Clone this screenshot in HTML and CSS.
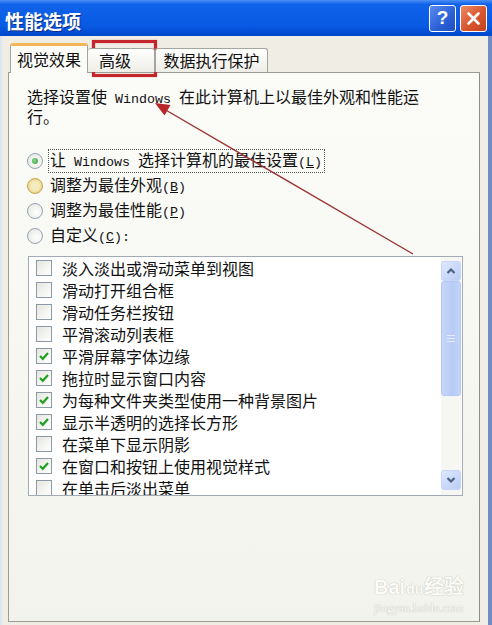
FILE: index.html
```html
<!DOCTYPE html>
<html lang="zh-CN">
<head>
    <meta charset="UTF-8">
    <meta name="viewport" content="width=device-width, initial-scale=1.0">
    <title>性能选项</title>

    <link rel="stylesheet" href="styles.css">
</head>

<body>

<div class="window">

    <!-- 标题栏 -->
    <div class="titlebar">
        <span class="title">性能选项</span>
        <div class="caption-buttons">
            <span class="cap-btn help">?</span>
            <span class="cap-btn close">
                <svg width="15" height="15" viewBox="0 0 15 15">
                    <path d="M2.5 2.5 L12.5 12.5 M12.5 2.5 L2.5 12.5" stroke="#fff" stroke-width="2.6" stroke-linecap="round"/>
                </svg>
            </span>
        </div>
    </div>

    <div class="client">

        <!-- 选项卡 -->
        <div class="tabs">
            <div class="tab active">视觉效果</div>
            <div class="tab second">高级</div>
            <div class="tab third">数据执行保护</div>
        </div>

        <div class="panel">
            <p class="desc">选择设置使<span class="en word">Windows</span>在此计算机上以最佳外观和性能运<br>行。</p>

            <div class="radios">
                <div class="radio">
                    <span class="dot checked"></span>
                    <span class="label focus">让<span class="en word">Windows</span>选择计算机的最佳设置<span class="en">(<u>L</u>)</span></span>
                </div>
                <div class="radio">
                    <span class="dot hover"></span>
                    <span class="label">调整为最佳外观<span class="en">(<u>B</u>)</span></span>
                </div>
                <div class="radio">
                    <span class="dot"></span>
                    <span class="label">调整为最佳性能<span class="en">(<u>P</u>)</span></span>
                </div>
                <div class="radio">
                    <span class="dot"></span>
                    <span class="label">自定义<span class="en">(<u>C</u>):</span></span>
                </div>
            </div>

            <!-- 复选框列表 -->
            <div class="listbox">
                <ul class="items">
                    <li><span class="box"></span>淡入淡出或滑动菜单到视图</li>
                    <li><span class="box"></span>滑动打开组合框</li>
                    <li><span class="box"></span>滑动任务栏按钮</li>
                    <li><span class="box"></span>平滑滚动列表框</li>
                    <li><span class="box on"></span>平滑屏幕字体边缘</li>
                    <li><span class="box on"></span>拖拉时显示窗口内容</li>
                    <li><span class="box on"></span>为每种文件夹类型使用一种背景图片</li>
                    <li><span class="box on"></span>显示半透明的选择长方形</li>
                    <li><span class="box"></span>在菜单下显示阴影</li>
                    <li><span class="box on"></span>在窗口和按钮上使用视觉样式</li>
                    <li><span class="box"></span>在单击后淡出菜单</li>
                </ul>
                <div class="scrollbar">
                    <div class="sb-btn">
                        <svg width="10" height="8" viewBox="0 0 10 8"><path d="M1.5 6 L5 2.5 L8.5 6" fill="none" stroke="#4d6185" stroke-width="2.2"/></svg>
                    </div>
                    <div class="thumb"><span class="grip"></span></div>
                    <div class="track"></div>
                    <div class="sb-btn">
                        <svg width="10" height="8" viewBox="0 0 10 8"><path d="M1.5 2 L5 5.5 L8.5 2" fill="none" stroke="#4d6185" stroke-width="2.2"/></svg>
                    </div>
                </div>
            </div>
        </div>

    </div>

    <!-- 红色标注 -->
    <svg class="annotation" width="492" height="625" viewBox="0 0 492 625">
        <rect x="93.5" y="41.5" width="62" height="34" fill="none" stroke="#c4262b" stroke-width="3.2"/>
        <line x1="413" y1="254" x2="164" y2="109" stroke="#9c3535" stroke-width="1.4"/>
        <polygon points="155,103 164.5,115.5 170.5,105" fill="#b8262a"/>
    </svg>

    <div class="watermark">
        <div class="wm-logo">Bai<span class="paw">du</span>经验</div>
        <div class="wm-url">jingyan.baidu.com</div>
    </div>

</div>

</body>
</html>
```

FILE: styles.css
```css
*
{
    margin: 0; padding: 0; box-sizing: border-box;
}

body
{
    width: 492px; height: 625px; overflow: hidden;
    background-color: #efede4; color: #111;
    font-family: "Noto Sans CJK SC", sans-serif; font-size: 16px;
}

.window { position: relative; width: 492px; height: 625px; }

/* 标题栏 */
.titlebar
{
    height: 36px; padding: 0 5px;
    display: flex; justify-content: space-between; align-items: center;
    background: linear-gradient(#4a90f6 0, #1162ea 12%, #0a5be4 70%, #0047cc 100%);
}

.title
{
    color: #fff; font-weight: bold; font-size: 19px; padding-top: 4px;
    text-shadow: 1px 1px 0 #0a2f8a;
}

.caption-buttons { display: flex; gap: 4px; }

.cap-btn
{
    width: 27px; height: 27px; border: 1px solid #fff; border-radius: 3px;
    display: flex; align-items: center; justify-content: center;
    color: #fff; font-family: "Liberation Sans", sans-serif;
    font-weight: bold; font-size: 19px;
}

.help { background: linear-gradient(135deg, #5a8cf0, #2a5fd6 60%, #1f4fc0); }

.close { background: linear-gradient(135deg, #eb8a66, #d8552e 55%, #c2431f); }

/* 窗口主体 */
.client
{
    height: 589px; padding: 7px 8px 0 6px;
    border-left: 2px solid #dbe7ee; border-right: 4px solid #6f8cc4;
    background-color: #efede4;
}

.tabs
{
    display: flex; align-items: flex-end; height: 30px;
    padding-left: 2px; margin-bottom: -1px;
    position: relative; z-index: 1;
}

.tab
{
    height: 24px; margin-bottom: 1px; padding-top: 1px;
    border: 1px solid #a3a69e; border-bottom: none; border-radius: 3px 3px 0 0;
    background: linear-gradient(#ffffff, #eeede6);
    text-align: center; font-size: 16px; line-height: 21px;
}

.tab.active
{
    width: 78px; height: 30px; margin-bottom: 0; padding-top: 3px;
    border-top: 3px solid #f3b75a;
    background: #fbfbf8;
}

.tab.second { width: 67px; text-align: left; padding-left: 11px; border-left: none; }

.tab.third { width: 113px; }

.panel
{
    height: 550px; padding: 15px 0 0 18px;
    border: 1px solid #9a9d94; border-right-color: #8c8f86;
    background: linear-gradient(#fbfbf8, #f3f3ed);
}

.en
{
    font-family: "Liberation Mono", monospace; font-size: 13.33px;
}

.en.word { margin: 0 8px; }

.desc { line-height: 17px; }

/* 单选按钮 */
.radios { margin-top: 23px; }

.radio { height: 25px; display: flex; align-items: center; }

.dot
{
    width: 16px; height: 16px; border-radius: 50%; margin-right: 5px;
    border: 1px solid #93a3b1;
    background: radial-gradient(circle at 60% 60%, #ffffff, #e3e3dc);
    display: flex; align-items: center; justify-content: center;
}

.dot.checked::after
{
    content: ""; width: 6px; height: 6px; border-radius: 50%;
    background: radial-gradient(circle at 40% 40%, #8fd88f, #2f9a34);
}

.dot.hover
{
    border-color: #c9a44c;
    background: radial-gradient(circle, #f4ebbf 40%, #e4c26a 100%);
}

.label
{
    border: 1px dotted transparent; padding: 0 2px 0 1px; line-height: 18px;
}

.label.focus { border-color: #555; }

/* 复选框列表 */
.listbox
{
    display: flex; width: 435px; height: 240px;
    margin: 8px 0 0 1px;
    border: 1px solid #a1aab5; background-color: #fff;
}

.items { flex: 1; list-style: none; overflow: hidden; }

.items li
{
    height: 22px; padding-left: 7px;
    display: flex; align-items: center; white-space: nowrap;
}

.box
{
    flex: none; width: 16px; height: 16px; margin-right: 10px;
    border: 1px solid #8c9aa8;
    background: linear-gradient(135deg, #e6e6df, #ffffff);
}

.box.on
{
    background-color: #f4f4f0;
    background-image: url("data:image/svg+xml,%3Csvg xmlns='http://www.w3.org/2000/svg' width='14' height='14'%3E%3Cpath d='M3 7 L5.8 9.8 L11 4' fill='none' stroke='%2321a121' stroke-width='2.2'/%3E%3C/svg%3E"),
        linear-gradient(135deg, #e6e6df, #ffffff);
}

.scrollbar
{
    width: 20px; margin-right: 1px; padding: 4px 0 5px;
    display: flex; flex-direction: column;
    background-color: #f6f6f2;
}

.sb-btn
{
    height: 20px; border: 1px solid #c6d5fb; border-radius: 3px;
    background: linear-gradient(135deg, #dfe8fd, #b9cdf6);
    display: flex; align-items: center; justify-content: center;
}

.thumb
{
    height: 115px; border: 1px solid #b4c8f2; border-radius: 3px;
    background: linear-gradient(90deg, #c6d6f9, #b7cbf4 60%, #c3d4f9);
    display: flex; align-items: center; justify-content: center;
}

.grip
{
    width: 8px; height: 7px;
    border-top: 1px solid #e6eefd; border-bottom: 1px solid #e6eefd;
    background: linear-gradient(#e6eefd, #e6eefd) center / 8px 1px no-repeat;
}

.track { flex: 1; }

/* 标注和水印 */
.annotation { position: absolute; top: 0; left: 0; pointer-events: none; }

.watermark
{
    position: absolute; left: 374px; top: 574px;
    color: #fbfbf8; text-shadow: 0 0 1px #c4c4bd, 0 0 1px #c4c4bd;
    font-family: "Liberation Sans", sans-serif;
}

.wm-logo { font-size: 20px; font-weight: bold; line-height: 26px; }

.paw { font-size: 14px; padding: 0 1px; }

.wm-logo, .wm-url { white-space: nowrap; }

.wm-url { font-family: "Liberation Serif", serif; font-size: 12px; line-height: 12px; }
```
